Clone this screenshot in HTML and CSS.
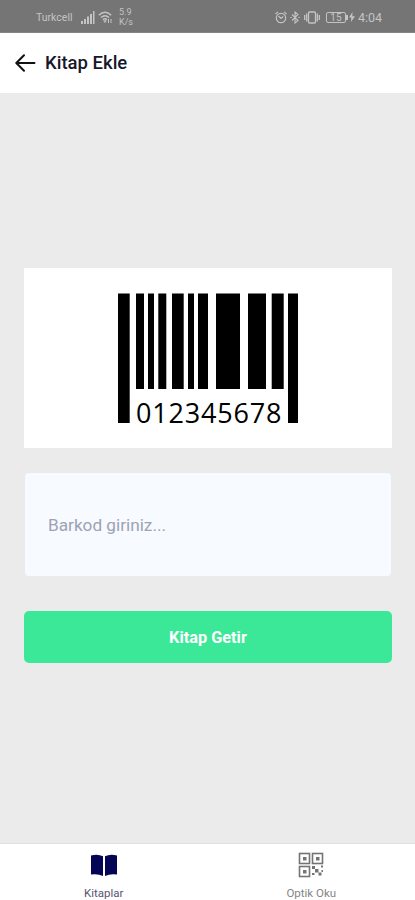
FILE: index.html
```html
<!DOCTYPE html>
<html lang="tr">
<head>
    <meta charset="UTF-8">
    <meta name="viewport" content="width=device-width, initial-scale=1.0">
    <title>Kitap Ekle</title>
    <link rel="stylesheet" href="styles.css">
</head>
<body>
    <div class="status-bar">
        <span class="carrier">Turkcell</span>
        <svg class="signal" width="14" height="13" viewBox="0 0 14 13" fill="currentColor">
            <path d="M0 10h2v3H0zM3 8h2v5H3zM6 5.500h2V13H6zM9 3h2v10H9zM12 0h1.500v13H12z"/>
        </svg>
        <svg class="wifi" width="15" height="13" viewBox="0 0 15 13" fill="none" stroke="currentColor" stroke-width="1.400">
            <path d="M.8 4.200Q7 -1.800 13.200 4.200M3 6.500Q7 2.800 11 6.500M5 8.700Q7 7 9 8.700"/>
            <path d="M5.800 9.800h2.400L7 11.500zM10.500 8v4M13 12V8" stroke-width="1"/>
        </svg>
        <span class="speed">5.9<br>K/s</span>
        <div class="status-right">
            <svg width="12" height="13" viewBox="0 0 12 13" fill="none" stroke="currentColor" stroke-width="1.200">
                <circle cx="6" cy="7" r="4.700"/>
                <path d="M.5 3 3 .9M11.500 3 9 .9M3.500 5 6 7.500 8.300 5.500"/>
            </svg>
            <svg width="10" height="13" viewBox="0 0 10 13" fill="none" stroke="currentColor" stroke-width="1.100">
                <path d="M2 3.500 8 9.500 5 12V1L8 3.500 2 9.500M.2 6.500h1.500M8.300 6.500h1.500"/>
            </svg>
            <svg class="vibrate" width="16" height="13" viewBox="0 0 16 13" fill="none" stroke="currentColor" stroke-width="1.300">
                <rect x="4.500" y="1" width="7" height="11" rx="1"/>
                <path d="M2.700 2.500v8M.7 4v5M13.300 2.500v8M15.300 4v5"/>
            </svg>
            <span class="battery">15</span>
            <svg class="charge" width="6" height="10" viewBox="0 0 6 10" fill="currentColor">
                <path d="M3.500 0 0 5.500h2.300L2 10l4-5.700H3.300z"/>
            </svg>
            <span class="clock">4:04</span>
        </div>
    </div>

    <header class="header">
        <svg width="21" height="18" viewBox="0 0 21 18" fill="none" stroke="currentColor" stroke-width="2" stroke-linecap="round" stroke-linejoin="round">
            <path d="M19.500 9H1.500M9 1.300 1.300 9 9 16.700"/>
        </svg>
        <h1>Kitap Ekle</h1>
    </header>

    <main class="content">
        <div class="barcode">
            <svg width="182" height="145" viewBox="0 0 182 145">
                <path d="M1 1.500h11.700v129.500H1zM19 1.500h8v95.500h-8zM31 1.500h6v95.500h-6zM41.300 1.500h8v95.500h-8zM55 1.500h11.700v95.500H55zM71 1.500h6v95.500h-6zM81 1.500h10v95.500H81zM99 1.500h24v95.500H99zM131 1.500h18v95.500h-18zM154.700 1.500h12v95.500h-12zM171 1.500h10v129.500h-10z"/>
                <text class="digits" x="19" y="131" textLength="145.500">012345678</text>
            </svg>
        </div>
        <input class="barcode-input" type="text" placeholder="Barkod giriniz...">
        <button class="submit">Kitap Getir</button>
    </main>

    <nav class="tabs">
        <a class="tab active">
            <svg width="28" height="24" viewBox="0 0 28 24" fill="currentColor">
                <path d="M1 2.500Q8 .5 13 3.300V23Q8 20.500 1 21.500zM27 2.500Q20 .5 15 3.300V23Q20 20.500 27 21.500z"/>
            </svg>
            <span>Kitaplar</span>
        </a>
        <a class="tab">
            <svg width="26" height="26" viewBox="0 0 26 26" fill="currentColor">
                <g fill="none" stroke="currentColor" stroke-width="1.600">
                    <rect x="1.500" y="1.500" width="10" height="10"/>
                    <rect x="14.500" y="1.500" width="10" height="10"/>
                    <rect x="1.500" y="14.500" width="10" height="10"/>
                </g>
                <path d="M5 5h3.500v3.500H5zM18 5h3.500v3.500H18zM5 18h3.500v3.500H5z"/>
                <path d="M14 14h3v3h-3zM17 17h3.500v3.500H17zM23 13.500h2v2h-2zM14 21h2.500v2H14zM20.500 20.500h3v3h-3zM23.500 18h1.500v2h-1.500z"/>
            </svg>
            <span>Optik Oku</span>
        </a>
    </nav>
</body>
</html>
```

FILE: styles.css
```css
:root {
    --bg-color: #ebebeb;
    --status-color: #757575;
    --title-color: #17172b;
    --accent-color: #3be898;
    --active-color: #050556;
}

* {
    box-sizing: border-box;
}

body {
    margin: 0;
    height: 900px;
    display: flex;
    flex-direction: column;
    font-family: Roboto, sans-serif;
    background-color: var(--bg-color);
    overflow: hidden;
}

.status-bar {
    height: 33px;
    flex-shrink: 0;
    display: flex;
    align-items: center;
    padding: 2px 33px 0 36px;
    background-color: var(--status-color);
    border-bottom: 1px solid #858585;
    color: #c4c4c4;
}

.carrier {
    width: 45px;
    font-size: 10.5px;
}

.wifi {
    margin-left: 3px;
}

.speed {
    margin-left: 6px;
    font-size: 9px;
    line-height: 10px;
}

.status-right {
    margin-left: auto;
    display: flex;
    align-items: center;
    gap: 3px;
}

.vibrate {
    margin-left: 1px;
}

.battery {
    position: relative;
    width: 20px;
    height: 11px;
    margin-left: 3px;
    border: 1px solid currentColor;
    border-radius: 2px;
    font-size: 10px;
    line-height: 10px;
    text-align: center;
}

.battery:after {
    content: "";
    position: absolute;
    top: 2px;
    right: -3px;
    width: 2px;
    height: 5px;
    background-color: currentColor;
}

.clock {
    font-size: 12.5px;
}

.header {
    height: 60px;
    flex-shrink: 0;
    display: flex;
    align-items: center;
    gap: 9px;
    padding: 0 15px;
    background-color: #fff;
    color: #111;
}

.header h1 {
    margin: 0;
    font-size: 18.5px;
    font-weight: 500;
    color: var(--title-color);
}

.content {
    flex: 1;
    display: flex;
    flex-direction: column;
    padding: 175px 23px 0 24px;
}

.barcode {
    height: 180px;
    display: flex;
    justify-content: center;
    padding-top: 24px;
    background-color: #fff;
}

.digits {
    font-family: "Open Sans", "Noto Sans", sans-serif;
    font-size: 27px;
}

.barcode-input {
    height: 103px;
    margin: 25px 1px 35px;
    padding: 1px 23px 0;
    border: none;
    border-radius: 4px;
    background-color: #f7faff;
    font-family: inherit;
    font-size: 17.2px;
}

.barcode-input::placeholder {
    color: #9ca3b5;
    opacity: 1;
}

.submit {
    height: 52px;
    padding: 1px 0 0;
    border: none;
    border-radius: 5px;
    background-color: var(--accent-color);
    color: #fff;
    font-family: inherit;
    font-size: 16.3px;
    font-weight: 700;
}

.tabs {
    height: 57px;
    flex-shrink: 0;
    display: flex;
    border-top: 1px solid #e0e0e0;
    background-color: #fff;
}

.tab {
    flex: 1;
    display: flex;
    flex-direction: column;
    align-items: center;
    color: #747474;
    font-size: 11.5px;
}

.tab svg {
    height: 26px;
    margin-top: 8px;
}

.tab span {
    margin-top: 8px;
    line-height: 14px;
    color: #858585;
}

.tab.active {
    color: var(--active-color);
}

.tab.active span {
    color: #56566f;
}
```
